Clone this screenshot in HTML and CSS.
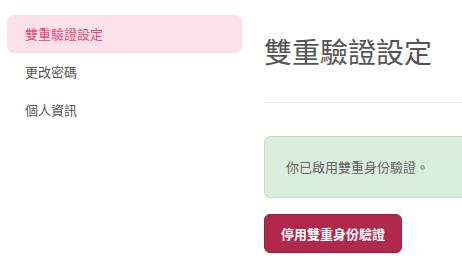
FILE: index.html
```html
<!DOCTYPE html>
<html lang="zh-Hant">
<head>
<meta charset="utf-8">
<link rel="stylesheet" href="styles.css">
</head>
<body>
<div class="layout">
  <nav class="sidebar">
    <a class="nav-item active">雙重驗證設定</a>
    <a class="nav-item">更改密碼</a>
    <a class="nav-item">個人資訊</a>
  </nav>
  <main class="content">
    <h1 class="title">雙重驗證設定</h1>
    <hr class="divider">
    <div class="alert">你已啟用雙重身份驗證。</div>
    <button class="btn-danger">停用雙重身份驗證</button>
  </main>
</div>
</body>
</html>
```
FILE: styles.css
```css
html, body {
  margin: 0;
  padding: 0;
  background: #fff;
}
body {
  font-family: "Noto Sans CJK TC", "Noto Sans", sans-serif;
  color: #555;
  width: 462px;
  height: 266px;
  overflow: hidden;
}
.layout {
  display: grid;
  grid-template-columns: 250px 212px;
}
.sidebar {
  display: flex;
  flex-direction: column;
  padding: 15px 8px 0 7px;
}
.nav-item {
  display: block;
  height: 38px;
  line-height: 38px;
  padding-left: 18px;
  font-size: 13px;
  color: #555;
  border-radius: 7px;
}
.nav-item.active {
  background: #fce1eb;
  color: #e04a80;
}
.content {
  padding: 33px 0 0 14px;
  min-width: 0;
  overflow: hidden;
}
.title {
  margin: 0;
  font-size: 28px;
  font-weight: 400;
  line-height: 36px;
  color: #555;
  white-space: nowrap;
}
.divider {
  margin: 33px -20px 0 0;
  border: 0;
  border-top: 1px solid #eee;
}
.alert {
  margin: 33px -20px 0 0;
  height: 62px;
  box-sizing: border-box;
  padding-left: 21px;
  line-height: 60px;
  font-size: 13px;
  color: #666;
  background: #d9eedb;
  border: 1px solid #c6e3c9;
  border-radius: 6px;
}
.btn-danger {
  display: block;
  margin-top: 16px;
  width: 138px;
  height: 39px;
  padding: 0;
  font-family: "Noto Sans CJK TC", "Noto Sans", sans-serif;
  font-size: 13px;
  font-weight: 700;
  color: #fff;
  background: #b0284b;
  border: 1px solid #9e1e3e;
  border-radius: 6px;
}
```
